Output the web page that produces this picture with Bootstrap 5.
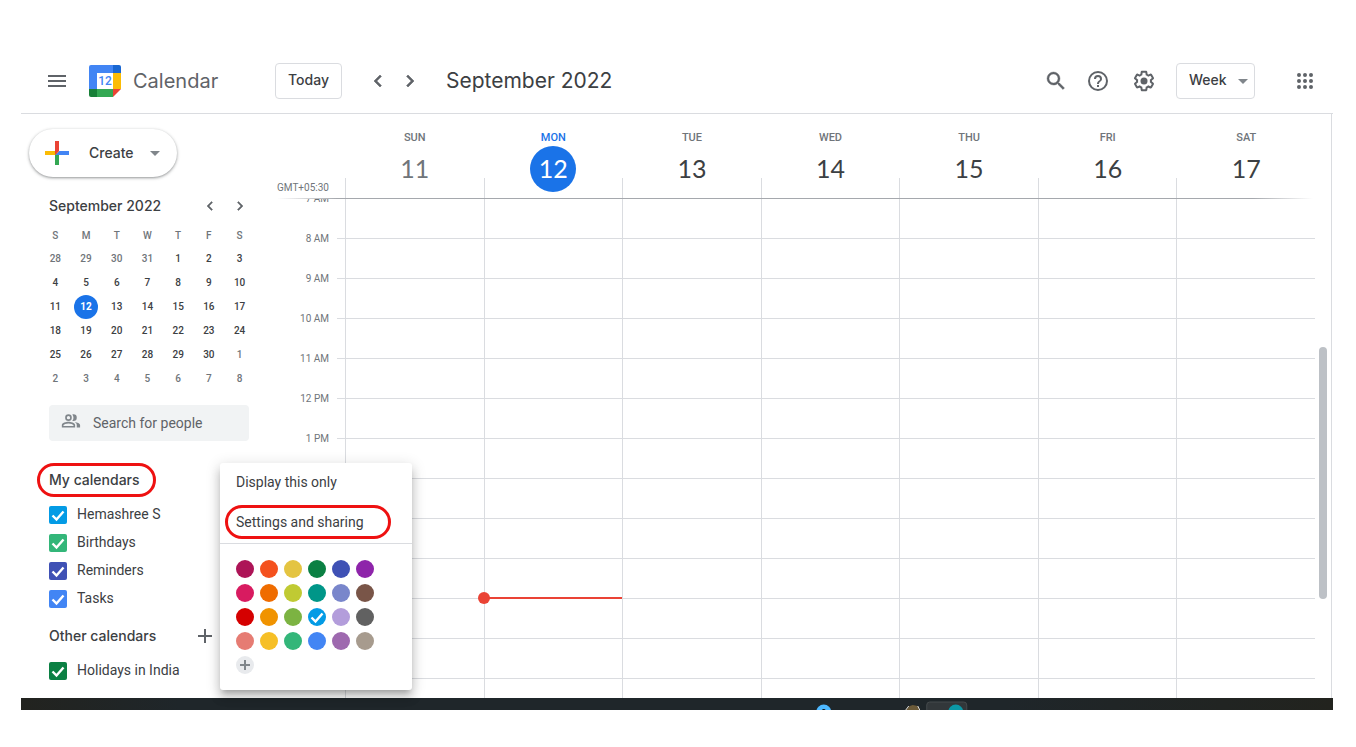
<!DOCTYPE html>
<html lang="en">
<head>
<meta charset="utf-8">
<meta name="viewport" content="width=device-width, initial-scale=1">
<title>Calendar - September 2022</title>
<link href="https://cdn.jsdelivr.net/npm/bootstrap@5.3.0/dist/css/bootstrap.min.css" rel="stylesheet">
<style>
:root{--line:#dadce0;--ink:#3c4043;--soft:#70757a;--icon:#5f6368;--blue:#1a73e8;--brand:Inter,"Open Sans",sans-serif}
body{font-family:Roboto,"Liberation Sans",sans-serif;font-size:14px;line-height:20px;color:var(--ink);background:#fff;padding:49px 23px 36px 21px}
svg{display:block;fill:var(--icon)}
button{color:inherit}
.plain{background:none;border:0;padding:0;flex:none}
.chevron svg{stroke:var(--icon);stroke-width:.6}
.topbar{height:65px;padding:0 16px 0 24px;border-bottom:1px solid var(--line)}
.brand{width:142px;font:400 20px/28px var(--brand);color:var(--icon)}
.outlined{height:36px;border:1px solid var(--line);border-radius:4px;background:#fff;font:500 14px/20px var(--brand);padding:0 12px 2px}
.month-title{font:400 21px/28px var(--brand);margin:0}
.help{margin:0 22px 0 18px}
.settings{margin-right:20px}
.apps{margin-left:38px}
.week-select{position:relative;width:79px}
.week-select select{appearance:none;width:100%;color:var(--ink)}
.week-select svg{position:absolute;right:0;top:6px;pointer-events:none}
.sidebar{width:256px;flex:none}
.create{width:148px;height:48px;margin:15px 0 0 8px;border:0;border-radius:24px;background:#fff;box-shadow:0 1px 2px rgba(60,64,67,.35),0 1px 3px 1px rgba(60,64,67,.18);font:500 14px/20px var(--brand);padding:0 10px}
.create svg{flex:none}
.create span{margin-left:14px}
.mini-head{margin:19px 28px 0;height:20px}
.head-text{font:500 14px/20px var(--brand);margin:0}
.mini{width:215px;margin:9px 0 0 19px;table-layout:fixed;font-size:10px;line-height:24px;text-align:center;font-weight:500}
.mini th,.mini td{padding:0;height:24px}
.mini th{font-weight:500;color:var(--soft);height:22px;line-height:22px}
.mini .other{color:var(--soft)}
.mini .now{display:block;width:24px;margin:auto;border-radius:50%;background:var(--blue);color:#fff;font-weight:700}
.people{margin:14px 28px 0;height:36px;background:#f1f3f4;border-radius:4px;padding:0 10px;gap:10px}
.people input{border:0;background:none;width:100%;min-width:0;padding:0;outline:0;color:var(--icon)}
.people input::placeholder{color:var(--icon);opacity:1}
.people svg{fill:#80868b}
.cals{margin:0 28px;position:relative}
.my-cals{padding:29px 0 10px}
.my-cals .cal-list{padding-top:14px}
.ringed{position:relative}
.ringed::after{content:"";position:absolute;border:3px solid #ee1111;border-radius:17px;pointer-events:none}
.cals .ringed::after{inset:-7px -16px -7px -12px}
.cal-row{height:28px;gap:10px}
.cal-row .form-check-input{width:18px;height:18px;margin:2px 0 0;border:0;border-radius:2px;flex:none;background-color:var(--c);background-size:18px}
.other-cals .cal-row{margin-top:14px}
.popup{position:absolute;left:171px;top:22px;width:192px;height:227px;background:#fff;border-radius:3px;box-shadow:0 8px 10px 1px rgba(0,0,0,.14),0 3px 14px 2px rgba(0,0,0,.12),0 5px 5px -3px rgba(0,0,0,.2);z-index:5}
.popup button.item{height:40px;width:100%;padding:0 16px 2px;text-align:left;display:block}
.popup .ringed::after{inset:2px 21px 4px 5px}
.swatches{display:grid;grid-template-columns:repeat(6,18px);gap:6px;padding:16px;border-top:1px solid var(--line)}
.swatches input{appearance:none;width:18px;height:18px;border-radius:50%;margin:0;background:var(--c) center/18px no-repeat}
.swatches input:checked,.cal-row .form-check-input:checked{background-image:url("data:image/svg+xml,%3Csvg xmlns='http://www.w3.org/2000/svg' viewBox='0 0 18 18'%3E%3Cpath d='M3.5 9.500l4 4 7-8' fill='none' stroke='%23fff' stroke-width='2.4'/%3E%3C/svg%3E")}
.add-color{width:18px;height:18px;border-radius:50%;background:#e8eaed}
.week{border-right:1px solid var(--line);margin-right:1px}
.zone{width:68px;flex:none;font-size:10px;color:var(--soft)}
.heads{height:84px}
.day-head{height:84px;padding:14px 0 0 1px;background:linear-gradient(var(--line),var(--line)) left bottom/1px 20px no-repeat}
.day-name{font-size:11px;font-weight:500;line-height:20px;color:var(--soft)}
.day-num{width:46px;height:46px;margin:-2px auto 0;border-radius:50%;font:400 25px/44px Lato,sans-serif}
.rule{height:1px;background:linear-gradient(90deg,transparent,#a5a8ad 60px,#a5a8ad calc(100% - 78px),transparent calc(100% - 18px))}
.grid-body{height:499px;overflow:hidden}
.hours{width:52px;margin:-20px 0 0;line-height:40px;text-align:right;padding:0;list-style:none}
.ticks{width:8px;margin-left:8px}
.lines{background:repeating-linear-gradient(transparent 0 39px,var(--line) 39px 40px)}
.day-col{border-left:1px solid var(--line);position:relative}
.now-line{position:absolute;left:0;right:0;top:398px;height:2px;background:#ea4335}
.now-line::before{content:"";position:absolute;left:-7px;top:-5px;width:12px;height:12px;border-radius:50%;background:#ea4335}
.gutter{width:16px;flex:none}
.thumb{width:8px;height:252px;margin:148px auto 0;border-radius:4px;background:#bdc1c6}
.taskbar{height:12px;overflow:hidden;background:linear-gradient(90deg,#22231f,#1f262a 12%,#1f262a 75%,#22231e)}
</style>
<script src="https://cdn.jsdelivr.net/npm/bootstrap@5.3.0/dist/js/bootstrap.bundle.min.js"></script>
</head>
<body>
<header class="topbar d-flex align-items-center">
  <button class="plain" aria-label="Main menu"><svg width="24" height="24"><path d="M3 18h18v-2H3v2zm0-5h18v-2H3v2zm0-7v2h18V6H3z"/></svg></button>
  <svg class="ms-3 me-2 flex-shrink-0" width="40" height="32" viewBox="-4 0 40 32" aria-hidden="true">
    <path fill="#4285f4" d="M2 0h22v8H8v16H0V2a2 2 0 0 1 2-2z"/><path fill="#1967d2" d="M24 0h6a2 2 0 0 1 2 2v6h-8z"/><path fill="#fbbc04" d="M24 8h8v16h-8z"/><path fill="#34a853" d="M8 24h16v8H8z"/><path fill="#188038" d="M0 24h8v8H2a2 2 0 0 1-2-2z"/><path fill="#ea4335" d="M24 24h8l-8 8z"/><path fill="#fff" d="M8 8h16v16H8z"/>
    <text x="16" y="20" text-anchor="middle" font-family="Roboto" font-size="12" font-weight="500" fill="#4285f4">12</text>
  </svg>
  <span class="brand">Calendar</span>
  <button class="outlined">Today</button>
  <button class="plain chevron ms-4" aria-label="Previous week"><svg width="24" height="24"><path d="M15.400 7.400 14 6l-6 6 6 6 1.400-1.400-4.600-4.600z"/></svg></button>
  <button class="plain chevron ms-2" aria-label="Next week"><svg width="24" height="24"><path d="M10 6 8.600 7.400l4.600 4.600-4.600 4.600L10 18l6-6z"/></svg></button>
  <h1 class="month-title ms-4">September 2022</h1>
  <div class="ms-auto d-flex align-items-center">
    <button class="plain" aria-label="Search"><svg width="24" height="24" viewBox="0 0 24 24" stroke="#5f6368" stroke-width=".4"><path d="M15.500 14h-.79l-.28-.27A6.470 6.470 0 0 0 16 9.500 6.500 6.500 0 1 0 9.500 16c1.610 0 3.090-.59 4.230-1.570l.27.28v.79l5 4.990L20.490 19l-4.990-5zm-6 0a4.500 4.500 0 1 1 0-9 4.500 4.500 0 0 1 0 9z"/></svg></button>
    <button class="plain help" aria-label="Help"><svg width="24" height="24"><path d="M11 18h2v-2h-2v2zm1-16a10 10 0 1 0 0 20 10 10 0 0 0 0-20zm0 18a8 8 0 1 1 0-16 8 8 0 0 1 0 16zm0-14a4 4 0 0 0-4 4h2a2 2 0 1 1 4 0c0 2-3 1.750-3 5h2c0-2.250 3-2.500 3-5a4 4 0 0 0-4-4z"/></svg></button>
    <button class="plain settings" aria-label="Settings"><svg width="24" height="24"><path d="M13.850 22.250h-3.700c-.74 0-1.360-.54-1.450-1.270l-.27-1.890c-.27-.14-.53-.29-.79-.46l-1.800.72c-.7.26-1.470-.03-1.810-.65L2.200 15.530c-.35-.66-.2-1.440.36-1.880l1.530-1.190c-.01-.15-.02-.3-.02-.46 0-.15.010-.31.020-.46l-1.520-1.190c-.59-.45-.74-1.260-.37-1.880l1.850-3.190c.34-.62 1.110-.9 1.790-.63l1.810.73c.26-.17.52-.32.78-.46l.27-1.910c.09-.7.71-1.250 1.440-1.250h3.700c.74 0 1.360.54 1.450 1.270l.27 1.890c.27.14.53.29.79.46l1.800-.72c.71-.26 1.480.03 1.820.65l1.840 3.180c.36.66.2 1.440-.36 1.880l-1.520 1.190c.01.15.02.3.02.46s-.01.31-.02.46l1.520 1.190c.56.45.72 1.230.37 1.860l-1.860 3.220c-.34.62-1.110.9-1.800.63l-1.800-.72c-.26.17-.52.32-.78.46l-.27 1.910c-.1.680-.72 1.220-1.460 1.220zm-3.230-2h2.760l.37-2.550.53-.22c.44-.18.88-.44 1.340-.78l.45-.34 2.380.96 1.380-2.400-2.030-1.580.07-.56c.03-.26.06-.51.06-.78s-.03-.53-.06-.78l-.07-.56 2.030-1.580-1.390-2.400-2.390.96-.45-.35c-.42-.32-.87-.58-1.330-.77l-.52-.22-.37-2.550h-2.760l-.37 2.550-.53.21c-.44.19-.88.44-1.340.79l-.45.330-2.380-.95-1.390 2.390 2.030 1.580-.07.560a7 7 0 0 0-.06.790c0 .26.020.53.060.78l.07.560-2.030 1.580 1.380 2.400 2.390-.96.45.350c.43.330.86.580 1.330.77l.53.220z"/><circle cx="12" cy="12" r="3.500"/></svg></button>
    <div class="week-select"><select class="outlined" aria-label="View"><option>Week</option></select><svg width="24" height="24"><path d="m7 10 5 5 5-5z" fill="#80868b"/></svg></div>
    <button class="plain apps" aria-label="Apps"><svg width="24" height="24"><path d="M6 8a2 2 0 1 0 0-4 2 2 0 0 0 0 4zm6 0a2 2 0 1 0 0-4 2 2 0 0 0 0 4zm6 0a2 2 0 1 0 0-4 2 2 0 0 0 0 4zM6 14a2 2 0 1 0 0-4 2 2 0 0 0 0 4zm6 0a2 2 0 1 0 0-4 2 2 0 0 0 0 4zm6 0a2 2 0 1 0 0-4 2 2 0 0 0 0 4zM6 20a2 2 0 1 0 0-4 2 2 0 0 0 0 4zm6 0a2 2 0 1 0 0-4 2 2 0 0 0 0 4zm6 0a2 2 0 1 0 0-4 2 2 0 0 0 0 4z"/></svg></button>
  </div>
</header>

<div class="d-flex">
  <aside class="sidebar">
    <button class="create d-flex align-items-center">
      <svg width="36" height="36" viewBox="0 0 36 36"><path fill="#34a853" d="M16 16v14h4V20z"/><path fill="#4285f4" d="M30 16H20l-4 4h14z"/><path fill="#fbbc05" d="M6 16v4h10l4-4z"/><path fill="#ea4335" d="M20 16V6h-4v14z"/></svg>
      <span>Create</span>
      <svg class="ms-auto" width="24" height="24"><path d="m7 10 5 5 5-5z" fill="#80868b"/></svg>
    </button>
    <div class="mini-head d-flex align-items-center">
      <h2 class="head-text me-auto">September 2022</h2>
      <button class="plain chevron" aria-label="Previous month"><svg width="18" height="18" viewBox="0 0 24 24"><path d="M15.400 7.400 14 6l-6 6 6 6 1.400-1.400-4.600-4.600z"/></svg></button>
      <button class="plain chevron ms-2 ps-1" aria-label="Next month"><svg width="18" height="18" viewBox="0 0 24 24"><path d="M10 6 8.600 7.400l4.600 4.600-4.600 4.600L10 18l6-6z"/></svg></button>
    </div>
    <table class="mini">
      <thead><tr><th>S</th><th>M</th><th>T</th><th>W</th><th>T</th><th>F</th><th>S</th></tr></thead>
      <tbody>
        <tr><td class="other">28</td><td class="other">29</td><td class="other">30</td><td class="other">31</td><td>1</td><td>2</td><td>3</td></tr>
        <tr><td>4</td><td>5</td><td>6</td><td>7</td><td>8</td><td>9</td><td>10</td></tr>
        <tr><td>11</td><td><span class="now">12</span></td><td>13</td><td>14</td><td>15</td><td>16</td><td>17</td></tr>
        <tr><td>18</td><td>19</td><td>20</td><td>21</td><td>22</td><td>23</td><td>24</td></tr>
        <tr><td>25</td><td>26</td><td>27</td><td>28</td><td>29</td><td>30</td><td class="other">1</td></tr>
        <tr><td class="other">2</td><td class="other">3</td><td class="other">4</td><td class="other">5</td><td class="other">6</td><td class="other">7</td><td class="other">8</td></tr>
      </tbody>
    </table>
    <label class="people d-flex align-items-center">
      <svg class="flex-shrink-0" width="24" height="24" viewBox="0 0 24 24"><path d="M15 8c0-1.420-.5-2.730-1.330-3.760.42-.14.860-.24 1.330-.24a4 4 0 1 1 0 8c-.47 0-.91-.1-1.330-.24A5.980 5.980 0 0 0 15 8zm1.660 5.130C18.030 14.060 19 15.320 19 17v3h4v-3c0-2.180-3.570-3.470-6.340-3.870zM9 6a2 2 0 1 1 0 4 2 2 0 0 1 0-4m0 9c2.700 0 5.800 1.290 6 2v1H3v-.99C3.200 16.290 6.300 15 9 15M9 4a4 4 0 1 0 0 8 4 4 0 0 0 0-8zm0 9c-2.670 0-8 1.340-8 4v3h16v-3c0-2.660-5.330-4-8-4z" transform="translate(2 0) scale(.83)"/></svg>
      <input type="text" placeholder="Search for people" aria-label="Search for people">
    </label>
    <section class="cals my-cals">
      <div class="d-flex"><h2 class="head-text ringed">My calendars</h2></div>
      <div class="cal-list">
        <label class="cal-row d-flex"><input class="form-check-input" type="checkbox" checked style="--c:#039be5">Hemashree S</label>
        <label class="cal-row d-flex"><input class="form-check-input" type="checkbox" checked style="--c:#33b679">Birthdays</label>
        <label class="cal-row d-flex"><input class="form-check-input" type="checkbox" checked style="--c:#3f51b5">Reminders</label>
        <label class="cal-row d-flex"><input class="form-check-input" type="checkbox" checked style="--c:#4285f4">Tasks</label>
      </div>
      <div class="popup">
        <button class="plain item">Display this only</button>
        <button class="plain item ringed">Settings and sharing</button>
        <div class="swatches">
          <input type="radio" name="color" aria-label="Radicchio" style="--c:#ad1457"><input type="radio" name="color" aria-label="Tangerine" style="--c:#f4511e"><input type="radio" name="color" aria-label="Citron" style="--c:#e4c441"><input type="radio" name="color" aria-label="Basil" style="--c:#0b8043"><input type="radio" name="color" aria-label="Blueberry" style="--c:#3f51b5"><input type="radio" name="color" aria-label="Grape" style="--c:#8e24aa">
          <input type="radio" name="color" aria-label="Cherry blossom" style="--c:#d81b60"><input type="radio" name="color" aria-label="Pumpkin" style="--c:#ef6c00"><input type="radio" name="color" aria-label="Avocado" style="--c:#c0ca33"><input type="radio" name="color" aria-label="Eucalyptus" style="--c:#009688"><input type="radio" name="color" aria-label="Lavender" style="--c:#7986cb"><input type="radio" name="color" aria-label="Cocoa" style="--c:#795548">
          <input type="radio" name="color" aria-label="Tomato" style="--c:#d50000"><input type="radio" name="color" aria-label="Mango" style="--c:#f09300"><input type="radio" name="color" aria-label="Pistachio" style="--c:#7cb342"><input type="radio" name="color" aria-label="Peacock" checked style="--c:#039be5"><input type="radio" name="color" aria-label="Wisteria" style="--c:#b39ddb"><input type="radio" name="color" aria-label="Graphite" style="--c:#616161">
          <input type="radio" name="color" aria-label="Flamingo" style="--c:#e67c73"><input type="radio" name="color" aria-label="Banana" style="--c:#f6bf26"><input type="radio" name="color" aria-label="Sage" style="--c:#33b679"><input type="radio" name="color" aria-label="Cobalt" style="--c:#4285f4"><input type="radio" name="color" aria-label="Amethyst" style="--c:#9e69af"><input type="radio" name="color" aria-label="Birch" style="--c:#a79b8e">
          <button class="plain add-color" aria-label="Add custom color"><svg width="18" height="18"><path d="M8 4h2v4h4v2h-4v4H8v-4H4V8h4z" fill="#80868b"/></svg></button>
        </div>
      </div>
    </section>
    <section class="cals other-cals">
      <div class="d-flex align-items-center justify-content-between"><h2 class="head-text">Other calendars</h2>
        <button class="plain me-4 pe-2" aria-label="Add other calendars"><svg width="24" height="20" viewBox="0 0 24 20"><path d="M19 11h-6v6h-2v-6H5V9h6V3h2v6h6z"/></svg></button></div>
      <label class="cal-row d-flex"><input class="form-check-input" type="checkbox" checked style="--c:#0b8043">Holidays in India</label>
    </section>
  </aside>

  <main class="week flex-fill">
    <div class="heads d-flex">
      <div class="zone align-self-end">GMT+05:30</div>
      <div class="d-flex flex-fill text-center">
        <div class="day-head col"><div class="day-name">SUN</div><div class="day-num" style="color:var(--soft)">11</div></div>
        <div class="day-head col"><div class="day-name" style="color:var(--blue)">MON</div><div class="day-num" style="background:var(--blue);color:#fff">12</div></div>
        <div class="day-head col"><div class="day-name">TUE</div><div class="day-num">13</div></div>
        <div class="day-head col"><div class="day-name">WED</div><div class="day-num">14</div></div>
        <div class="day-head col"><div class="day-name">THU</div><div class="day-num">15</div></div>
        <div class="day-head col"><div class="day-name">FRI</div><div class="day-num">16</div></div>
        <div class="day-head col"><div class="day-name">SAT</div><div class="day-num">17</div></div>
      </div>
      <div class="gutter"></div>
    </div>
    <div class="rule"></div>
    <div class="grid-body d-flex">
      <div class="zone d-flex">
        <ul class="hours"><li>7 AM</li><li>8 AM</li><li>9 AM</li><li>10 AM</li><li>11 AM</li><li>12 PM</li><li>1 PM</li></ul>
        <div class="ticks lines"></div>
      </div>
      <div class="lines d-flex flex-fill">
        <div class="day-col col"></div><div class="day-col col"><div class="now-line"></div></div><div class="day-col col"></div><div class="day-col col"></div><div class="day-col col"></div><div class="day-col col"></div><div class="day-col col"></div>
      </div>
      <div class="gutter"><div class="thumb"></div></div>
    </div>
  </main>
</div>
<footer class="taskbar">
  <svg width="100%" height="12" aria-hidden="true"><svg x="60.500%" width="160" height="12" overflow="visible"><circle cx="9" cy="14" r="7.500" fill="#4db8ff"/><circle cx="9" cy="13" r="2" fill="#111"/><path d="M91 12l4-4 3-1 5 1 2 4z" fill="#6b5a38"/><path d="M91 12l3-4M105 12l-2-4" stroke="#ddd" stroke-width="1"/><rect x="112" y="4" width="40" height="20" rx="3" fill="#32373a" stroke="#454a4c"/><circle cx="141" cy="14" r="7.500" fill="#0b98a6"/></svg></svg>
</footer>
</body>
</html>
